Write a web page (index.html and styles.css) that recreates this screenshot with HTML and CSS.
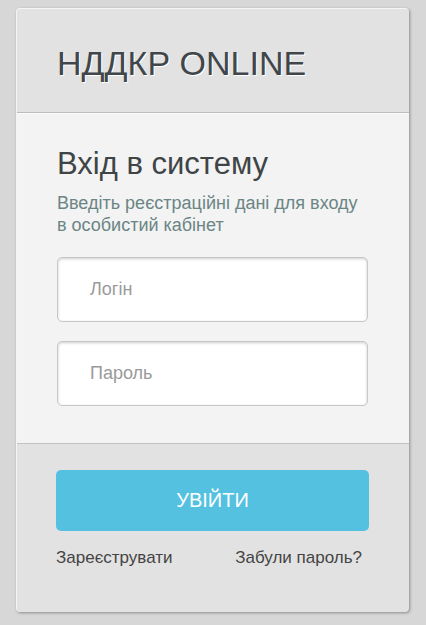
FILE: index.html
```html
<!DOCTYPE html>
<html lang="uk">
<head>
<meta charset="utf-8">
<title>НДДКР ONLINE</title>
<link rel="stylesheet" href="styles.css">
</head>
<body>
<div class="card">
  <div class="card-head">
    <h1 class="brand">НДДКР ONLINE</h1>
  </div>
  <div class="card-body">
    <h2 class="title">Вхід в систему</h2>
    <p class="subtitle">Введіть реєстраційні дані для входу в особистий кабінет</p>
    <input class="field" type="text" placeholder="Логін">
    <input class="field" type="password" placeholder="Пароль">
  </div>
  <div class="card-foot">
    <button class="btn" type="button">УВІЙТИ</button>
    <div class="links">
      <a class="link" href="#">Зареєструвати</a>
      <a class="link" href="#">Забули пароль?</a>
    </div>
  </div>
</div>
</body>
</html>
```
FILE: styles.css
```css
html, body {
  margin: 0;
  padding: 0;
}
body {
  background: #d7d7d7;
  font-family: "Liberation Sans", Arial, sans-serif;
  padding: 8px 17px 13px 16px;
}
.card {
  width: 393px;
  height: 604px;
  box-sizing: border-box;
  background: #e2e2e2;
  border-radius: 4px;
  border-top: 1px solid #f4f4f4;
  border-left: 1px solid #f4f4f4;
  box-shadow: 1px 1px 3px rgba(0,0,0,0.35);
  display: flex;
  flex-direction: column;
  overflow: hidden;
}
.card-head {
  flex: 0 0 auto;
  border-bottom: 1px solid #bdbdbd;
  padding-left: 40px;
  box-sizing: border-box;
  height: 104px;
}
.brand {
  margin: 32px 0 0;
  font-weight: normal;
  font-size: 34px;
  line-height: 44px;
  color: #40464a;
  text-shadow: 1px 1px 0 #fff;
}
.card-body {
  flex: 0 0 auto;
  background: #f3f3f3;
  border-bottom: 1px solid #c2c2c2;
  border-top: 1px solid #fafafa;
  padding: 30px 40px 16px;
  display: flex;
  flex-direction: column;
  box-sizing: border-box;
  height: 331px;
}
.title {
  margin: 0;
  font-weight: normal;
  font-size: 31px;
  line-height: 40px;
  color: #3f4446;
}
.subtitle {
  margin: 8px 0 21px;
  font-size: 18px;
  line-height: 22px;
  color: #6b8585;
}
.field {
  flex: 0 0 65px;
  height: 65px;
  box-sizing: border-box;
  width: 311px;
  border: 1px solid #c7c7c7;
  border-radius: 5px;
  background: #fff;
  box-shadow: inset 0 1px 3px rgba(0,0,0,0.2);
  padding: 0 32px;
  font-family: "Liberation Sans", Arial, sans-serif;
  font-size: 18px;
  color: #444;
  margin: 0 0 19px;
  outline: none;
}
.field::placeholder {
  color: #9a9a9a;
}
.card-foot {
  padding: 26px 39px 0;
  display: flex;
  flex-direction: column;
  flex: 1;
}
.btn {
  height: 61px;
  width: 313px;
  border: 0;
  border-radius: 5px;
  background: #54c1e1;
  color: #fff;
  font-family: "Liberation Sans", Arial, sans-serif;
  font-size: 20px;
  padding: 0;
}
.links {
  display: flex;
  justify-content: space-between;
  width: 306px;
  margin-top: 17px;
}
.link {
  color: #444;
  font-size: 17px;
  text-decoration: none;
  line-height: 20px;
}
```
